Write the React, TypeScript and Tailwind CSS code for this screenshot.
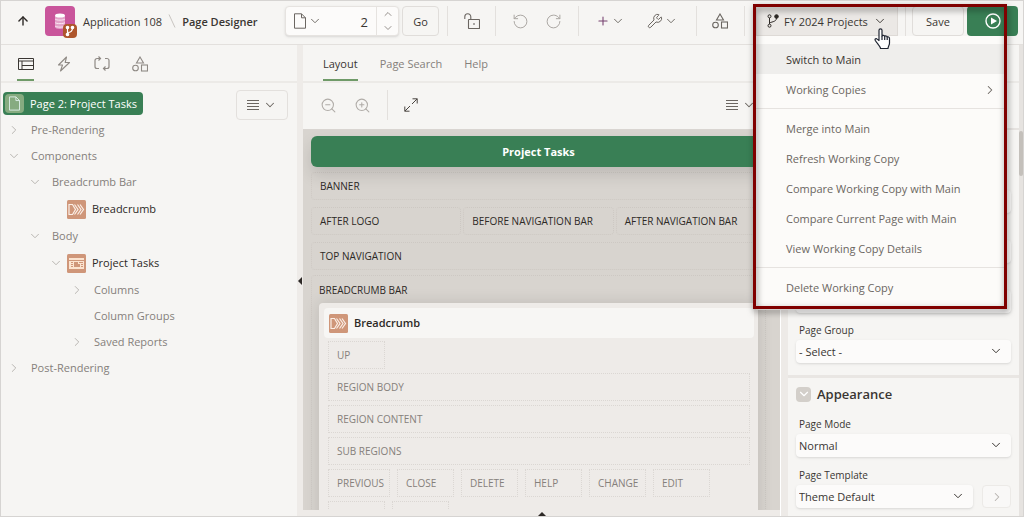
import { useState, type ReactNode } from "react";
import {
  ArrowUp,
  ChevronDown,
  ChevronRight,
  ChevronUp,
  Maximize2,
  Plus,
  RotateCcw,
  RotateCw,
  Wrench,
  ZoomIn,
  ZoomOut,
} from "lucide-react";

type NodeIcon = "page" | "breadcrumb" | "report";

interface TreeNode {
  label: string;
  depth: number;
  state?: "open" | "closed";
  icon?: NodeIcon;
}

const TREE: TreeNode[] = [
  { label: "Pre-Rendering", depth: 0, state: "closed" },
  { label: "Components", depth: 0, state: "open" },
  { label: "Breadcrumb Bar", depth: 1, state: "open" },
  { label: "Breadcrumb", depth: 2, icon: "breadcrumb" },
  { label: "Body", depth: 1, state: "open" },
  { label: "Project Tasks", depth: 2, state: "open", icon: "report" },
  { label: "Columns", depth: 3, state: "closed" },
  { label: "Column Groups", depth: 3 },
  { label: "Saved Reports", depth: 3, state: "closed" },
  { label: "Post-Rendering", depth: 0, state: "closed" },
];

const INDENT = ["pl-[6px]", "pl-[27px]", "pl-[48px]", "pl-[69px]"];

const MENU: string[][] = [
  ["Switch to Main", "Working Copies"],
  [
    "Merge into Main",
    "Refresh Working Copy",
    "Compare Working Copy with Main",
    "Compare Current Page with Main",
    "View Working Copy Details",
  ],
  ["Delete Working Copy"],
];

const SLOTS = ["PREVIOUS", "CLOSE", "DELETE", "HELP", "CHANGE", "EDIT"];

export default function App() {
  return (
    <div className="flex h-screen flex-col overflow-hidden border border-[#d6d4d2] bg-[#f6f5f3] font-['Open_Sans',sans-serif] text-[11px] leading-4 text-[#3a3632]">
      <Header />
      <div className="flex min-h-0 flex-1">
        <TreePane />
        <Splitter />
        <LayoutPane />
        <div className="w-2 shrink-0 border-l border-white bg-[#edeae7]" />
        <PropertyPane />
      </div>
    </div>
  );
}

function Divider() {
  return <span className="h-[30px] w-px shrink-0 bg-[#e3e0dd]" />;
}

function Header() {
  return (
    <header className="relative z-20 flex h-11 shrink-0 items-center border-b border-[#e3e0dd] pr-[5px] pb-[3px]">
      <div className="flex w-[284px] shrink-0 items-center pl-[15px]">
        <button aria-label="Up" className="w-4">
          <ArrowUp className="size-[14px] text-[#2d2926]" strokeWidth={2.4} />
        </button>
        <AppIcon />
        <a href="#app" className="ml-2 pt-0.5">Application 108</a>
        <svg className="mx-[6px] h-4 w-2" viewBox="0 0 8 16" fill="none" stroke="#c9c5c1">
          <path d="M1 1.5 7 14.5" />
        </svg>
        <span className="pt-0.5 font-semibold">Page Designer</span>
      </div>

      <div className="flex h-[30px] w-[114px] shrink-0 items-center rounded-sm border border-[#e6e3e0] bg-[#fcfbfa] shadow-sm">
        <button aria-label="Page finder" className="flex items-center gap-0.5 pl-2 text-[#6b6661]">
          <PageGlyph className="h-4 w-3" />
          <ChevronDown className="size-[14px]" strokeWidth={1.6} />
        </button>
        <input aria-label="Page number" defaultValue="2" className="w-0 min-w-0 flex-1 bg-transparent pt-0.5 pr-2 text-right text-[13px] outline-none" />
        <div className="flex h-full w-[22px] flex-col items-center justify-evenly border-l border-[#e6e3e0] text-[#8a8580]">
          <button aria-label="Next page"><ChevronUp className="size-3" strokeWidth={1.8} /></button>
          <button aria-label="Previous page"><ChevronDown className="size-3" strokeWidth={1.8} /></button>
        </div>
      </div>
      <button className="ml-[3px] h-[30px] w-[37px] shrink-0 rounded-sm border border-[#e0ddda] pt-0.5">Go</button>

      <div className="flex flex-1 items-center justify-between pr-[11px] pl-2 text-[#6b6661]">
        <Divider />
        <button aria-label="Unlock page"><UnlockIcon /></button>
        <Divider />
        <div className="flex gap-4 text-[#aaa6a2]">
          <button aria-label="Undo"><RotateCcw className="size-[17px]" strokeWidth={1.4} /></button>
          <button aria-label="Redo"><RotateCw className="size-[17px]" strokeWidth={1.4} /></button>
        </div>
        <Divider />
        <div className="flex gap-[22px] px-0.5">
          <button aria-label="Create" className="flex items-center gap-px">
            <Plus className="size-[14px] text-[#75406f]" strokeWidth={1.8} />
            <ChevronDown className="size-[14px]" strokeWidth={1.6} />
          </button>
          <button aria-label="Utilities" className="flex items-center gap-px">
            <Wrench className="size-4" strokeWidth={1.5} />
            <ChevronDown className="size-[14px]" strokeWidth={1.6} />
          </button>
        </div>
        <Divider />
        <button aria-label="Shared components"><ShapesIcon /></button>
        <Divider />
      </div>

      <WorkingCopyMenu />
      <div className="flex shrink-0 items-center pl-[7px]">
        <Divider />
        <button className="ml-1.5 h-[30px] w-[52px] rounded-sm border border-[#e0ddda] pt-0.5">Save</button>
        <button aria-label="Save and run page" className="ml-[3px] flex h-[30px] w-[51px] items-center justify-center rounded-sm bg-[#397f55]">
          <svg className="size-4" viewBox="0 0 16 16" fill="none" stroke="#fff">
            <circle cx="8" cy="8" r="7" strokeWidth="1.4" />
            <path d="M6 4.5 12 8l-6 3.500z" fill="#fff" stroke="none" />
          </svg>
        </button>
      </div>
    </header>
  );
}

function WorkingCopyMenu() {
  const [open, setOpen] = useState(true);

  return (
    <div className="relative shrink-0">
      <button
        onClick={() => setOpen(!open)}
        className="flex h-[30px] w-[142px] items-center border border-[#dedad6] bg-[#ebe8e5] pl-[10px]"
      >
        <BranchIcon className="h-[14px] w-3 text-[#2d2926]" />
        <span className="mx-[5px] pt-0.5">FY 2024 Projects</span>
        <ChevronDown className="size-[14px]" strokeWidth={1.6} />
      </button>

      {open && (
        <div role="menu" className="absolute top-full left-0 w-[249px] bg-[#fcfbf9] py-2 text-[#6b6661]">
          {MENU.map((group, g) => (
            <div key={group[0]} className={g > 0 ? "mt-1 border-t border-[#e6e3e0] pt-1" : ""}>
              {group.map((item) => (
                <button
                  key={item}
                  role="menuitem"
                  className={`flex h-[30px] w-full items-center justify-between pt-0.5 pr-2 pl-[30px] ${
                    item === "Switch to Main" ? "bg-[#efeeec] text-[#3a3632]" : ""
                  }`}
                >
                  {item}
                  {item === "Working Copies" && <ChevronRight className="size-[14px]" strokeWidth={1.8} />}
                </button>
              ))}
            </div>
          ))}
        </div>
      )}

      {open && (
        <div className="pointer-events-none absolute -top-[2px] -left-[3px] h-[305px] w-[254px] border-[3px] border-[#800000] drop-shadow-[1px_3px_3px_rgba(0,0,0,0.5)]" />
      )}
      <HandCursor />
    </div>
  );
}

function TreePane() {
  return (
    <aside className="flex w-[296px] shrink-0 flex-col">
      <div className="flex h-[38px] shrink-0 items-stretch gap-[22px] border-b-2 border-[#eceae7] pl-4 text-[#8f8a85]">
        <button aria-label="Rendering" className="flex w-[17px] items-center justify-center border-b-2 border-[#6f9a68] pt-1 text-[#3a3632]">
          <LayoutIcon />
        </button>
        <button aria-label="Dynamic actions" className="w-4 pt-px"><BoltIcon /></button>
        <button aria-label="Processing" className="w-4 pt-px"><ProcessIcon /></button>
        <button aria-label="Shared components" className="w-4 pt-px"><ShapesIcon /></button>
      </div>

      <div className="flex items-start justify-between pt-[7px] pr-[9px] pl-0.5">
        <div className="mt-0.5 flex h-[23px] items-center gap-1.5 rounded bg-[#397f55] pr-1.5 pl-0.5 text-white">
          <NodeBadge icon="page" />
          Page 2: Project Tasks
        </div>
        <button aria-label="Tree options" className="flex h-[30px] w-[52px] items-center justify-center gap-1 rounded-sm border border-[#e3e0dd] text-[#6b6661]">
          <LinesIcon />
          <ChevronDown className="size-[14px]" strokeWidth={1.8} />
        </button>
      </div>

      <ul className="-mt-[3px] text-[#85807b]">
        {TREE.map((node) => (
          <TreeRow key={node.label} node={node} />
        ))}
      </ul>
    </aside>
  );
}

function TreeRow({ node }: { node: TreeNode }) {
  return (
    <li className={`flex items-center ${INDENT[node.depth]} ${node.icon ? "h-7 text-[#2d2926]" : "h-[26px]"}`}>
      <span className="w-3 shrink-0 text-[#b5b1ad]">
        {node.state === "open" && <ChevronDown className="size-[14px]" strokeWidth={1.6} />}
        {node.state === "closed" && <ChevronRight className="size-[14px]" strokeWidth={1.6} />}
      </span>
      {node.icon ? (
        <span className="mr-1.5 ml-[6px]"><NodeBadge icon={node.icon} /></span>
      ) : (
        <span className="w-3" />
      )}
      {node.label}
    </li>
  );
}

function Splitter() {
  return (
    <div className="flex w-1.5 shrink-0 items-center justify-center bg-[#eeebe8]">
      <svg className="h-2 w-1" viewBox="0 0 4 8">
        <path d="M4 0v8L0 4z" fill="#2d2926" />
      </svg>
    </div>
  );
}

function LayoutPane() {
  return (
    <main className="flex min-w-0 flex-1 flex-col">
      <nav className="flex h-[38px] shrink-0 gap-[22px] border-b-2 border-[#eceae7] pl-5 text-[#85807b]">
        <a href="#layout" className="flex items-center border-b-2 border-[#6f9a68] pt-1 text-[#3a3632]">Layout</a>
        <a href="#search" className="flex items-center pt-0.5">Page Search</a>
        <a href="#help" className="flex items-center pt-0.5">Help</a>
      </nav>

      <div className="flex h-[47px] shrink-0 items-center border-b border-[#d9d5d1] pr-6 pb-0.5 pl-[17px] text-[#b0aca8]">
        <button aria-label="Zoom out"><ZoomOut className="size-[17px]" strokeWidth={1.5} /></button>
        <button aria-label="Zoom in" className="ml-[17px]"><ZoomIn className="size-[17px]" strokeWidth={1.5} /></button>
        <span className="mx-4 flex"><Divider /></span>
        <button aria-label="Expand"><ExpandIcon /></button>
        <button aria-label="Layout options" className="ml-auto flex items-center gap-1 text-[#6b6661]">
          <LinesIcon />
          <ChevronDown className="size-[14px]" strokeWidth={1.8} />
        </button>
      </div>

      <div className="min-h-0 flex-1 overflow-hidden bg-[#d8d4cf] pt-1.5 pr-[14px] pl-2">
        <h1 className="relative flex h-[31px] items-center justify-center rounded-md bg-[#397f55] font-bold text-white shadow-[0_8px_16px_rgba(0,0,0,0.12)]">
          Project Tasks
        </h1>
        <div className="mt-[5px] flex flex-col gap-[7px] text-[10px] text-[#2d2926]">
          <Region>BANNER</Region>
          <div className="grid grid-cols-3 gap-0.5">
            <Region>AFTER LOGO</Region>
            <Region>BEFORE NAVIGATION BAR</Region>
            <Region>AFTER NAVIGATION BAR</Region>
          </div>
          <Region>TOP NAVIGATION</Region>
          <section className="-mt-0.5 rounded border border-dotted border-[#cdc8c3] px-[7px] pb-8">
            <div className="flex h-[27px] items-center">BREADCRUMB BAR</div>
            <div className="rounded bg-[#eeebe8] pt-[5px] pr-1 pb-8 pl-[5px] shadow-[0_0_16px_rgba(0,0,0,0.12)]">
              <div className="flex h-[30px] items-center gap-1.5 rounded bg-[#f7f6f4] pl-[5px] text-[11px] font-semibold">
                <NodeBadge icon="breadcrumb" />
                Breadcrumb
              </div>
              <div className="flex flex-col gap-1 px-1 pt-[3px] text-[#85807b]">
                <Slot className="w-[57px]">UP</Slot>
                <Slot>REGION BODY</Slot>
                <Slot>REGION CONTENT</Slot>
                <Slot>SUB REGIONS</Slot>
                <div className="flex gap-[7px]">
                  {SLOTS.map((slot) => (
                    <Slot key={slot} className={slot === "PREVIOUS" ? "w-[62px]" : "w-[57px]"}>{slot}</Slot>
                  ))}
                </div>
                <div className="flex gap-[7px]">
                  <Slot className="w-[57px]" />
                  <Slot className="w-[57px]" />
                </div>
              </div>
            </div>
          </section>
        </div>
      </div>

      <div className="flex h-1.5 shrink-0 items-end justify-center bg-[#eeebe8]">
        <svg className="h-1 w-2" viewBox="0 0 8 4">
          <path d="M0 4h8L4 0z" fill="#2d2926" />
        </svg>
      </div>
    </main>
  );
}

function Region({ children }: { children: ReactNode }) {
  return (
    <div className="flex h-7 items-center rounded border border-dotted border-[#cdc8c3] pl-2 whitespace-nowrap">
      {children}
    </div>
  );
}

function Slot({ children, className = "" }: { children?: ReactNode; className?: string }) {
  return (
    <div className={`flex h-7 shrink-0 items-center border border-dotted border-[#dbd7d3] pl-2 ${className}`}>
      {children}
    </div>
  );
}

function PropertyPane() {
  return (
    <aside className="flex w-[235px] shrink-0">
      <div className="flex min-w-0 flex-1 flex-col">
        <div className="h-[38px] shrink-0 border-b-2 border-[#eceae7]" />
        <div className="h-[47px] shrink-0 border-b-2 border-[#e6e3e0]" />
        <section className="flex h-[248px] shrink-0 flex-col justify-end gap-[27px] border-b-[3px] border-[#e9e6e3] px-2 pb-3">
          <input aria-label="Name" className="h-[23px] rounded-sm bg-[#fcfbfa] shadow-sm" />
          <input aria-label="Alias" className="h-[23px] rounded-sm bg-[#fcfbfa] shadow-sm" />
          <input aria-label="Title" className="h-[23px] rounded-sm bg-[#fcfbfa] shadow-sm" />
          <SelectField id="group" label="Page Group" value="- Select -" className="-mt-[18px]" />
        </section>
        <section className="flex flex-col px-2 pt-1.5">
          <h2 className="mb-3 flex h-5 items-center gap-1.5 text-[13px] font-semibold">
            <button aria-label="Collapse Appearance" className="flex size-[15px] items-center justify-center rounded-sm bg-[#d3cfca] text-white">
              <ChevronDown className="size-[14px]" strokeWidth={2} />
            </button>
            Appearance
          </h2>
          <SelectField id="mode" label="Page Mode" value="Normal" />
          <div className="mt-2.5 flex items-end gap-[9px]">
            <SelectField id="template" label="Page Template" value="Theme Default" className="flex-1" />
            <button aria-label="Go to template" className="flex h-[23px] w-[29px] items-center justify-center rounded-sm border border-[#eceae7] bg-[#f9f8f7] text-[#b5b1ad]">
              <ChevronRight className="size-[14px]" strokeWidth={1.8} />
            </button>
          </div>
        </section>
      </div>
      <div className="w-1 shrink-0 bg-[#e6e3e0] pt-[86px]">
        <div className="h-[45px] rounded-sm bg-[#c4c0bb]" />
      </div>
    </aside>
  );
}

interface SelectFieldProps {
  id: string;
  label: string;
  value: string;
  className?: string;
}

function SelectField({ id, label, value, className = "" }: SelectFieldProps) {
  return (
    <div className={`flex flex-col gap-0.5 ${className}`}>
      <label htmlFor={id} className="pl-[3px] text-[10px]">{label}</label>
      <div className="relative">
        <select id={id} className="h-[23px] w-full appearance-none rounded-sm bg-[#fcfbfa] pl-[3px] shadow-sm">
          <option>{value}</option>
        </select>
        <ChevronDown className="pointer-events-none absolute top-1 right-2 size-[14px]" strokeWidth={1.7} />
      </div>
    </div>
  );
}

function NodeBadge({ icon }: { icon: NodeIcon }) {
  if (icon === "page") {
    return (
      <span className="flex size-[19px] items-center justify-center rounded-sm bg-[#86ab80] text-[#dff0ea]">
        <PageGlyph className="h-[15px] w-[11px]" />
      </span>
    );
  }
  return (
    <svg className="block size-[19px]" viewBox="0 0 19 19" fill="none">
      <rect width="19" height="19" rx="1.500" fill="#cf9679" />
      {icon === "breadcrumb" ? (
        <g stroke="#fbeee6" strokeWidth="1.2">
          <path d="M2 4.500h3.500L8.500 9.500l-3 5H2z" />
          <path d="m7.500 4.500 3.500 5-3.500 5M10.500 4.500l3.500 5-3.500 5M13 4.500l3.500 5-3.500 5" />
        </g>
      ) : (
        <g>
          <rect x="2" y="4" width="15" height="11" fill="#fbe3cf" />
          <path d="M2 6.500h15M4 8.500h2M4 10.500h2M4 12.500h2M12 8.500h4M14 10.500h2M14 12.500h2" stroke="#cf9679" />
          <path d="M7 8h4v2h2v3H7z" fill="#cf9679" />
        </g>
      )}
    </svg>
  );
}

function AppIcon() {
  return (
    <span className="relative ml-[13px] flex size-[30px] shrink-0 items-center justify-center rounded-sm bg-[#c9559b]">
      <svg className="h-4 w-3" viewBox="0 0 12 16">
        <path d="M1 3v11c0 1 2 2 5 2s5-1 5-2V3z" fill="#e3a3c9" />
        <ellipse cx="6" cy="2.500" rx="5" ry="2" fill="#fff" />
        <path d="M1 6c1 1.500 9 1.500 10 0M1 9.500c1 1.500 9 1.500 10 0M1 13c1 1.500 9 1.500 10 0" stroke="#fbe6f3" fill="none" />
      </svg>
      <span className="absolute top-[18px] left-[18px] flex size-[14px] items-center justify-center rounded-sm bg-[#ae562c]">
        <svg className="size-3" viewBox="0 0 12 12" fill="none" stroke="#fff" strokeWidth="1.200">
          <path d="M3.500 3v6M3.500 7.500c3 0 5-1 5-4.500" />
          <circle cx="3.500" cy="2.500" r="1.200" fill="#fff" />
          <circle cx="3.500" cy="9.500" r="1.200" fill="#fff" />
          <circle cx="8.500" cy="2.500" r="1.200" fill="#fff" />
        </svg>
      </span>
    </span>
  );
}

function PageGlyph({ className }: { className: string }) {
  return (
    <svg className={className} viewBox="0 0 12 16" fill="none" stroke="currentColor">
      <path d="M.5.8h7l4 4v10.400H.5zM7.500.8v4h4" />
    </svg>
  );
}

function UnlockIcon() {
  return (
    <svg className="size-4" viewBox="0 0 16 16" fill="none" stroke="currentColor" strokeWidth="1.100">
      <path d="M.8 6V3.800a3 3 0 0 1 6 0V6.500" />
      <rect x="4.500" y="6.500" width="11" height="9" rx=".5" />
      <path d="M10 10v2" />
    </svg>
  );
}

function ExpandIcon() {
  return (
    <svg className="size-[14px] text-[#4a4540]" viewBox="0 0 14 14" fill="none" stroke="currentColor">
      <path d="M8.500.8h4.700v4.700M13.200.8 8 6M5.500 13.200H.8V8.500M.8 13.200 6 8" />
    </svg>
  );
}

function BranchIcon({ className }: { className: string }) {
  return (
    <svg className={className} viewBox="0 0 12 14" fill="none" stroke="currentColor" strokeWidth="1">
      <circle cx="2.500" cy="2.300" r="1.500" />
      <circle cx="2.500" cy="11.700" r="1.500" />
      <circle cx="9.500" cy="2.500" r="1.800" fill="currentColor" />
      <path d="M2.500 4v6M2.500 9.500C3 7.500 9.500 8.500 9.500 4" />
    </svg>
  );
}

function BoltIcon() {
  return (
    <svg className="size-4" viewBox="0 0 16 16" fill="none" stroke="currentColor" strokeWidth="1.100" strokeLinejoin="round">
      <path d="M10.500 1 2.500 9h4l-2 6 9-8.500H9.200z" />
    </svg>
  );
}

function ShapesIcon() {
  return (
    <svg className="size-4" viewBox="0 0 16 16" fill="none" stroke="currentColor" strokeWidth="1.100">
      <path d="M8 1 11.500 7h-7z" />
      <circle cx="3.500" cy="12" r="2.800" />
      <rect x="9.500" y="9" width="6" height="6" />
    </svg>
  );
}

function LayoutIcon() {
  return (
    <svg className="h-3 w-4" viewBox="0 0 16 12" fill="none" stroke="currentColor">
      <path d="M.5.5h15v11H.5zM.5 3h15M4 3v8.500M4 7.500h11.500" />
    </svg>
  );
}

function ProcessIcon() {
  return (
    <svg className="size-4" viewBox="0 0 16 16" fill="none" stroke="currentColor" strokeWidth="1.200">
      <path d="M6.500 2.500H3a2 2 0 0 0-2 2v6a2 2 0 0 0 2 2h2M9.500 12.500H13a2 2 0 0 0 2-2v-6a2 2 0 0 0-2-2h-2" />
      <path d="m4.500.5 2 2-2 2M11.500 10.500l-2 2 2 2" />
    </svg>
  );
}

function LinesIcon() {
  return (
    <svg className="h-[10px] w-3" viewBox="0 0 12 10" stroke="currentColor">
      <path d="M0 .5h12M0 3.500h12M0 6.500h12M0 9.500h12" />
    </svg>
  );
}

function HandCursor() {
  return (
    <svg className="pointer-events-none absolute top-[22px] left-[118px] h-[22px] w-[17px]" viewBox="0 0 17 22" fill="#fff" stroke="#1f2430" strokeWidth="1.200" strokeLinejoin="round">
      <path d="M5 12.500V2.300a1.500 1.500 0 0 1 3 0V8c.3-1 2.500-.8 2.700.4.500-.8 2.300-.5 2.500.7.700-.5 2.300-.1 2.300 1.300v4.800c0 2-1.500 3-1.500 5.300H6.500c0-2-4-5.500-5.300-8.200-.6-1.400 1-2.200 2-1.200z" />
      <path d="M8 8v4M10.700 8.600V12M13.200 9.300V12" fill="none" />
    </svg>
  );
}
